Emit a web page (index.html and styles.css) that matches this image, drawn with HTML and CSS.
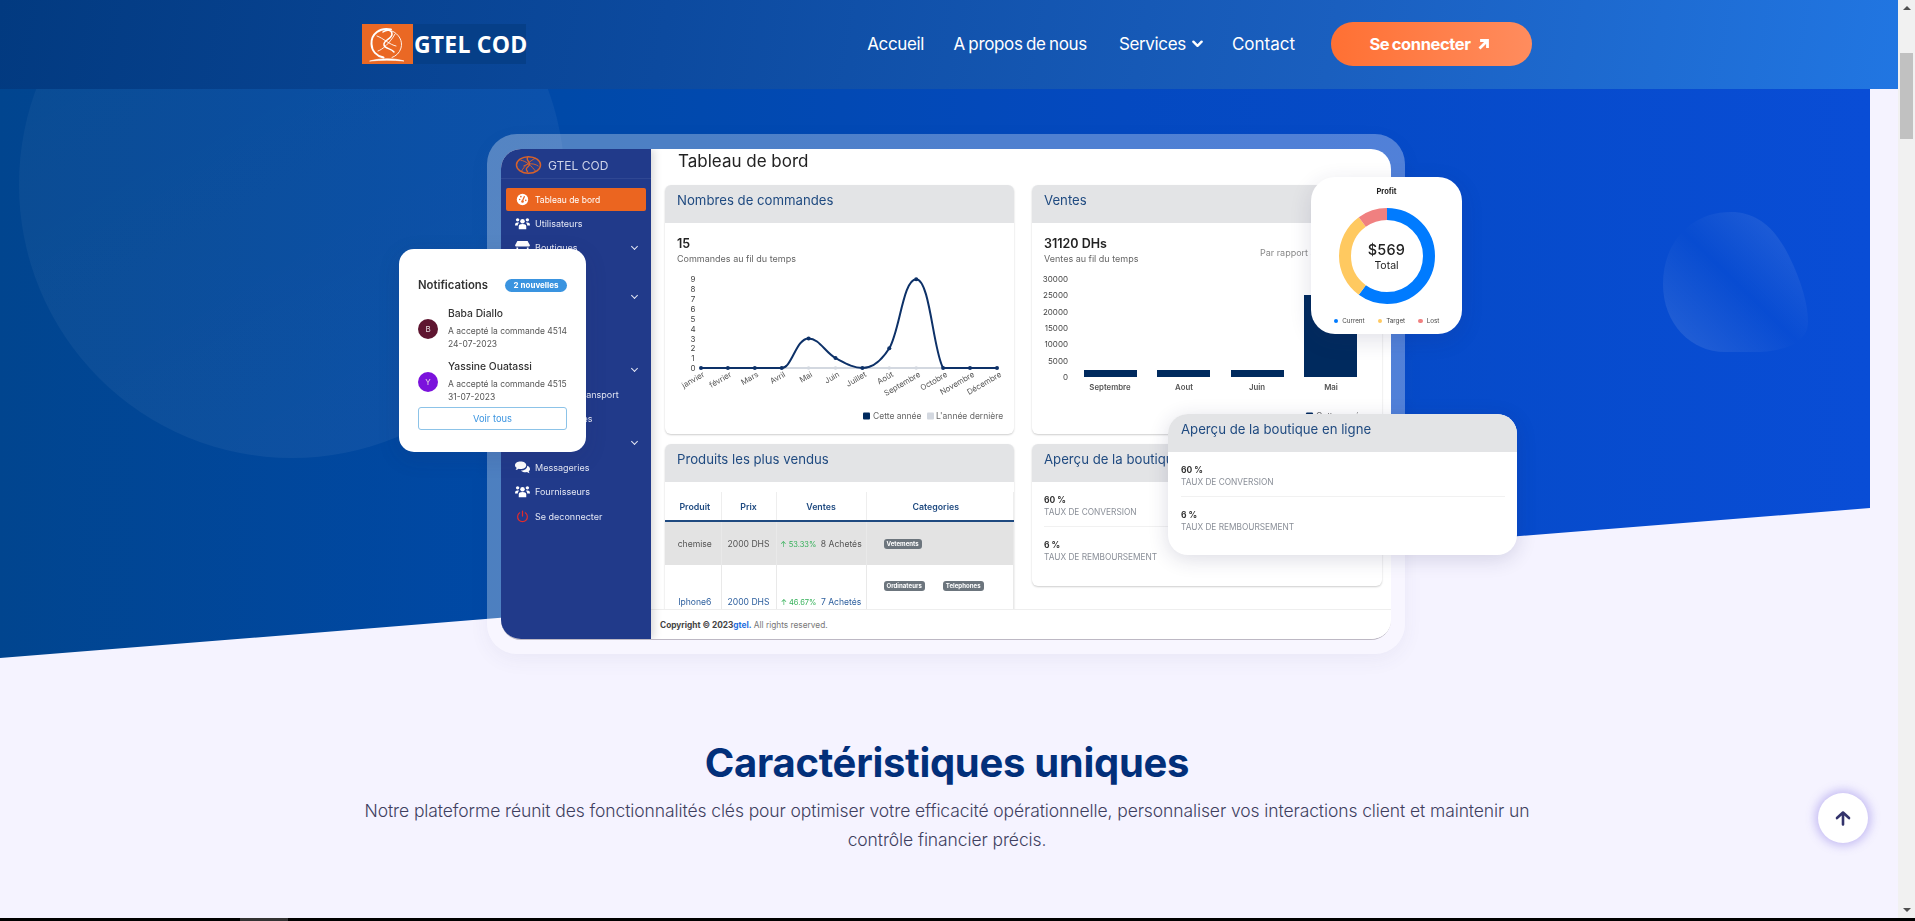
FILE: index.html
```html
<!DOCTYPE html>
<html lang="fr">
<head>
<meta charset="utf-8">
<title>GTEL COD</title>
<link rel="stylesheet" href="styles.css">
</head>
<body>
<div class="app">
  <div class="page">
    <header class="topbar">
      <div class="container topbar-row">
        <a class="logo">
          <span class="logo-mark">
            <svg viewBox="0 0 51 40" width="51" height="40" fill="none" stroke="#fff" stroke-linecap="round">
              <path d="M29 5.500C18 3 9 10 9.500 20c.3 7 5 12 12 13.500" stroke-width="2"/>
              <path d="M30 7c7 3 11 10 9 17-1.500 5-5 8-9 9.500" stroke-width=".9"/>
              <path d="M21 8c4-3 9-2 9 2 0 5-9 6-8 11 .8 4 7 3 10 7" stroke-width="1.500"/>
              <path d="M15 12c6 2 13 9 19 10M16 27c4-1 12-8 17-17" stroke-width=".9"/>
              <path d="M8 37c9-3 25-3 34 0-11-1-23-1-34 0z" fill="#fff" stroke-width=".6"/>
            </svg>
          </span>
          <span class="logo-text">GTEL COD</span>
        </a>
        <nav class="nav">
          <a class="nav-link">Accueil</a>
          <a class="nav-link">A propos de nous</a>
          <a class="nav-link nav-drop">Services
            <svg viewBox="0 0 12 8" width="11" height="8" fill="none" stroke="#fff" stroke-width="2.600" stroke-linecap="round" stroke-linejoin="round"><path d="M1.500 1.500 6 6l4.500-4.500"/></svg>
          </a>
          <a class="nav-link">Contact</a>
          <a class="cta">Se connecter
            <svg viewBox="0 0 12 12" width="12" height="12" fill="none" stroke="#fff" stroke-width="2.800" stroke-linecap="square"><path d="M2.500 9.500 9 3M3.500 2.500H9.500V8.500"/></svg>
          </a>
        </nav>
      </div>
    </header>

    <section class="hero">
      <div class="hero-bg">
        <span class="blob blob-left"></span>
        <svg class="blob-right" viewBox="0 0 145 140" width="145" height="140">
          <defs>
            <linearGradient id="blobGrad2" x1="0" y1="1" x2="1" y2="0">
              <stop offset="0" stop-color="#fff" stop-opacity=".13"/>
              <stop offset=".5" stop-color="#fff" stop-opacity="0"/>
              <stop offset="1" stop-color="#fff" stop-opacity=".13"/>
            </linearGradient>
          </defs>
          <path d="M68 0c26 0 44 16 58 44 12 24 19 48 19 66 0 22-26 30-55 30H62C28 140 0 112 0 72 0 30 28 0 68 0z" fill="url(#blobGrad2)"/>
        </svg>
      </div>

      <div class="container">
        <div class="mock">
          <div class="mock-inner">
            <aside class="side">
              <div class="side-brand">
                <svg viewBox="0 0 28 22" width="27" height="22" fill="none" stroke="#d9622a" stroke-linecap="round">
                  <ellipse cx="14" cy="11" rx="12.500" ry="8.500" fill="#2a3f8c" stroke-width="1.500"/>
                  <path d="M6 6c6 1 11 6 15 11M21 4C15 7 9 13 7 17M9 12c5-3 11-3 15 0" stroke-width="1"/>
                  <path d="M13 3c-2 4 4 5 2 8s-5 3-2 7" stroke-width="1.400"/>
                </svg>
                <span>GTEL COD</span>
              </div>
              <ul class="menu">
                <li class="menu-item active">
                  <svg class="ico" viewBox="0 0 16 16"><circle cx="8" cy="8" r="7" fill="#fff"/><path d="M8 9.500 10.500 4" stroke="#eb6520" stroke-width="1.500"/><circle cx="4.500" cy="8" r="1" fill="#eb6520"/><circle cx="6" cy="4.500" r="1" fill="#eb6520"/><circle cx="12" cy="9" r="1" fill="#eb6520"/><circle cx="8" cy="10.500" r="1.600" fill="#eb6520"/></svg>
                  Tableau de bord</li>
                <li class="menu-item">
                  <svg class="ico" viewBox="0 0 16 13" fill="#fff"><circle cx="8" cy="4" r="2.400"/><circle cx="2.800" cy="2.600" r="1.800"/><circle cx="13.200" cy="2.600" r="1.800"/><path d="M4 12.500V9.500C4 7.700 5.500 7 8 7s4 .7 4 2.500v3zM0 8.500C0 6 1 5.300 2.800 5.300c.7 0 1.200.1 1.600.4C3.500 6.400 3 7.400 3 8.500zM16 8.500c0-2.500-1-3.200-2.800-3.200-.7 0-1.200.1-1.600.4.9.7 1.400 1.700 1.400 2.800z"/></svg>
                  Utilisateurs</li>
                <li class="menu-item">
                  <svg class="ico" viewBox="0 0 16 14" fill="#fff"><path d="M2.500 0h11L16 4.500c0 1-.8 1.500-1.500 1.500h-13C.8 6 0 5.500 0 4.500z"/><path d="M1.500 7h1.800v4.500h9.400V7h1.800v7h-1.800v-1H3.300v1H1.500z"/></svg>
                  Boutiques <span class="caret"></span></li>
                <li class="menu-item"><span class="ico"></span>Ventes</li>
                <li class="menu-item"><span class="ico"></span>Produits <span class="caret"></span></li>
                <li class="menu-item"><span class="ico"></span>Stocks</li>
                <li class="menu-item"><span class="ico"></span>Livraisons</li>
                <li class="menu-item"><span class="ico"></span>Logistique <span class="caret"></span></li>
                <li class="menu-item"><span class="ico"></span>Modes de transport</li>
                <li class="menu-item"><span class="ico"></span>Mes comptes</li>
                <li class="menu-item"><span class="ico"></span>Finances <span class="caret"></span></li>
                <li class="menu-item">
                  <svg class="ico" viewBox="0 0 16 13" fill="#fff"><path d="M6 0c3.300 0 6 1.700 6 4s-2.700 4-6 4c-.8 0-1.500-.1-2.200-.3C2.800 8.500 1.500 9 .5 9c.6-.6 1.100-1.300 1.200-2.200C.6 6.100 0 5.100 0 4c0-2.300 2.700-4 6-4z"/><path d="M13 4.500c1.800.7 3 2 3 3.500 0 1-.5 1.900-1.400 2.600.1.700.5 1.400 1 1.900-.9 0-2-.4-2.900-1.100-.5.1-1.100.2-1.700.2-2 0-3.800-.8-4.600-2 3.900 0 6.700-2.200 6.600-5.100z"/></svg>
                  Messageries</li>
                <li class="menu-item">
                  <svg class="ico" viewBox="0 0 16 13" fill="#fff"><circle cx="8" cy="4" r="2.400"/><circle cx="2.800" cy="2.600" r="1.800"/><circle cx="13.200" cy="2.600" r="1.800"/><path d="M4 12.500V9.500C4 7.700 5.500 7 8 7s4 .7 4 2.500v3zM0 8.500C0 6 1 5.300 2.800 5.300c.7 0 1.200.1 1.600.4C3.500 6.400 3 7.400 3 8.500zM16 8.500c0-2.500-1-3.200-2.800-3.200-.7 0-1.200.1-1.600.4.9.7 1.400 1.700 1.400 2.800z"/></svg>
                  Fournisseurs</li>
                <li class="menu-item">
                  <svg class="ico" viewBox="0 0 16 16" fill="none" stroke="#e02c2c" stroke-width="1.500" stroke-linecap="round"><path d="M8 1.500v6M4.500 3.500a6 6 0 1 0 7 0"/></svg>
                  Se deconnecter</li>
              </ul>
            </aside>

            <div class="main">
              <div class="main-scroll">
                <h2 class="main-title">Tableau de bord</h2>
                <div class="cards">
                  <article class="card card-tall">
                    <h3 class="card-head">Nombres de commandes</h3>
                    <div class="stat"><div><strong>15</strong><p>Commandes au fil du temps</p></div></div>
                    <svg class="chart" viewBox="0 0 349 160" width="349" height="160">
                      <g class="tick-y">
                        <text x="28" y="101">0</text><text x="28" y="91">1</text><text x="28" y="81">2</text><text x="28" y="71.500">3</text><text x="28" y="61.500">4</text><text x="28" y="51.500">5</text><text x="28" y="42">6</text><text x="28" y="32">7</text><text x="28" y="22">8</text><text x="28" y="12">9</text>
                      </g>
                      <g class="tick-x">
                        <text transform="translate(40 106) rotate(-30)">janvier</text>
                        <text transform="translate(67 106) rotate(-30)">février</text>
                        <text transform="translate(94 106) rotate(-30)">Mars</text>
                        <text transform="translate(121 106) rotate(-30)">Avril</text>
                        <text transform="translate(148 106) rotate(-30)">Mai</text>
                        <text transform="translate(175 106) rotate(-30)">Juin</text>
                        <text transform="translate(202 106) rotate(-30)">Juillet</text>
                        <text transform="translate(229 106) rotate(-30)">Août</text>
                        <text transform="translate(256 106) rotate(-30)">Septembre</text>
                        <text transform="translate(283 106) rotate(-30)">Octobre</text>
                        <text transform="translate(310 106) rotate(-30)">Novembre</text>
                        <text transform="translate(337 106) rotate(-30)">Décembre</text>
                      </g>
                      <path d="M116.700 98H278" class="line-old"/>
                      <g class="dots-old"><circle cx="143.600" cy="98" r="1.800"/><circle cx="170.500" cy="98" r="1.800"/><circle cx="224.300" cy="98" r="1.800"/><circle cx="251.200" cy="98" r="1.800"/></g>
                      <path class="line-new" d="M36 98H116.700C127 98 131 68.400 143.600 68.400 154 68.400 160 82 170.500 88.100 180 93 188 98 197.400 98 208 98 217 90 224.300 78.300 235 60 238 9.200 251.200 9.200 265 9.200 268 80 278.100 98H332"/>
                      <g class="dots-new"><circle cx="36" cy="98" r="2"/><circle cx="62.900" cy="98" r="2"/><circle cx="89.800" cy="98" r="2"/><circle cx="116.700" cy="98" r="2"/><circle cx="143.600" cy="68.400" r="2"/><circle cx="170.500" cy="88.100" r="2"/><circle cx="197.400" cy="98" r="2"/><circle cx="224.300" cy="78.300" r="2"/><circle cx="251.200" cy="9.200" r="2"/><circle cx="278.100" cy="98" r="2"/><circle cx="305" cy="98" r="2"/><circle cx="332" cy="98" r="2"/></g>
                      <rect x="198" y="142.500" width="7" height="7" rx="1" fill="#002a5e"/>
                      <text class="legend" x="208" y="149">Cette année</text>
                      <rect x="262" y="142.500" width="7" height="7" rx="1" fill="#d3d8e0"/>
                      <text class="legend" x="271" y="149">L'année dernière</text>
                    </svg>
                  </article>

                  <article class="card card-tall">
                    <h3 class="card-head">Ventes</h3>
                    <div class="stat stat-split"><div><strong>31120 DHs</strong><p>Ventes au fil du temps</p></div><span class="compare">Par rapport au mois dernier</span></div>
                    <svg class="chart" viewBox="0 0 350 160" width="350" height="160">
                      <g class="tick-end">
                        <text x="36" y="12">30000</text><text x="36" y="28">25000</text><text x="36" y="44.500">20000</text><text x="36" y="61">15000</text><text x="36" y="77">10000</text><text x="36" y="93.500">5000</text><text x="36" y="110">0</text>
                      </g>
                      <g fill="#002a5e"><rect x="52" y="100" width="53" height="7"/><rect x="125" y="100" width="53" height="7"/><rect x="199" y="100" width="53" height="7"/><rect x="272" y="25" width="53" height="82"/></g>
                      <g class="tick-mid">
                        <text x="78" y="120">Septembre</text><text x="152" y="120">Aout</text><text x="225" y="120">Juin</text><text x="299" y="120">Mai</text>
                      </g>
                      <rect x="274" y="142.500" width="7" height="7" rx="1" fill="#002a5e"/>
                      <text class="legend" x="284" y="149">Cette année</text>
                    </svg>
                  </article>

                  <article class="card">
                    <h3 class="card-head">Produits les plus vendus</h3>
                    <table class="table">
                      <thead><tr><th>Produit</th><th>Prix</th><th>Ventes</th><th>Categories</th></tr></thead>
                      <tbody>
                        <tr class="row-grey">
                          <td>chemise</td><td>2000 DHS</td>
                          <td><span class="up">↑ 53.33%</span> 8 Achetés</td>
                          <td class="cats"><span class="tag">Vetements</span></td>
                        </tr>
                        <tr class="row-link">
                          <td>Iphone6</td><td>2000 DHS</td>
                          <td><span class="up">↑ 46.67%</span> 7 Achetés</td>
                          <td class="cats cats-top"><span class="tag">Ordinateurs</span><span class="tag">Telephones</span></td>
                        </tr>
                      </tbody>
                    </table>
                  </article>

                  <article class="card">
                    <h3 class="card-head">Aperçu de la boutique en ligne</h3>
                    <div class="kpi"><strong>60 %</strong><span>TAUX DE CONVERSION</span></div>
                    <div class="kpi"><strong>6 %</strong><span>TAUX DE REMBOURSEMENT</span></div>
                  </article>
                </div>
              </div>
              <footer class="mock-foot"><b>Copyright © 2023</b><b class="brand">gtel.</b> All rights reserved.</footer>
            </div>
          </div>

          <div class="float notif">
            <div class="notif-head"><h4>Notifications</h4><span class="pill">2 nouvelles</span></div>
            <div class="notif-row">
              <span class="avatar avatar-b">B</span>
              <div><h5>Baba Diallo</h5><p>A accepté la commande 4514<br>24-07-2023</p></div>
            </div>
            <div class="notif-row">
              <span class="avatar avatar-y">Y</span>
              <div><h5>Yassine Ouatassi</h5><p>A accepté la commande 4515<br>31-07-2023</p></div>
            </div>
            <a class="see-all">Voir tous</a>
          </div>

          <div class="float profit">
            <h4>Profit</h4>
            <div class="donut">
              <svg viewBox="0 0 96 96" width="96" height="96" fill="none" stroke-width="12">
                <circle cx="48" cy="48" r="42" stroke="#007bff" pathLength="100" stroke-dasharray="60 40" transform="rotate(-90 48 48)"/>
                <circle cx="48" cy="48" r="42" stroke="#ffc960" pathLength="100" stroke-dasharray="30 70" stroke-dashoffset="-60" transform="rotate(-90 48 48)"/>
                <circle cx="48" cy="48" r="42" stroke="#f08080" pathLength="100" stroke-dasharray="10 90" stroke-dashoffset="-90" transform="rotate(-90 48 48)"/>
              </svg>
              <div class="donut-label"><b>$569</b><span>Total</span></div>
            </div>
            <ul class="profit-legend">
              <li><i class="dot dot-blue"></i>Current</li>
              <li><i class="dot dot-yellow"></i>Target</li>
              <li><i class="dot dot-red"></i>Lost</li>
            </ul>
          </div>

          <div class="float overview card">
            <h3 class="card-head">Aperçu de la boutique en ligne</h3>
            <div class="kpi"><strong>60 %</strong><span>TAUX DE CONVERSION</span></div>
            <div class="kpi"><strong>6 %</strong><span>TAUX DE REMBOURSEMENT</span></div>
          </div>
        </div>
      </div>
    </section>

    <section class="features container">
      <h2>Caractéristiques uniques</h2>
      <p>Notre plateforme réunit des fonctionnalités clés pour optimiser votre efficacité opérationnelle, personnaliser vos interactions client et maintenir un contrôle financier précis.</p>
    </section>

    <a class="to-top">
      <svg viewBox="0 0 16 16" width="16" height="16" fill="none" stroke="#33336b" stroke-width="2.600" stroke-linecap="round" stroke-linejoin="round"><path d="M8 14.500V2.500M2 8l6-5.500L14 8"/></svg>
    </a>
  </div>

  <div class="scrollbar">
    <span class="arrow arrow-up"></span>
    <span class="thumb"></span>
    <span class="arrow arrow-down"></span>
  </div>
</div>
<div class="taskbar"><span></span></div>
</body>
</html>
```

FILE: styles.css
```css
* { box-sizing: border-box; }
html, body { margin: 0; padding: 0; height: 100%; overflow: hidden; }
body { font-family: "Inter", "Liberation Sans", sans-serif; background: #f5f3ff; color: #333; }
h2, h3, h4, h5, p, ul { margin: 0; padding: 0; }
ul { list-style: none; }

.app { display: flex; height: 918px; }
.page { position: relative; flex: 1; min-width: 0; height: 918px; overflow: hidden; background: #f5f3ff; }
.container { width: 1170px; margin-left: 362px; }

/* Scrollbar */
.scrollbar { width: 17px; background: #f1f1f1; display: flex; flex-direction: column; align-items: center; padding-top: 6px; position: relative; }
.arrow { width: 0; height: 0; border-left: 4px solid transparent; border-right: 4px solid transparent; }
.arrow-up { border-bottom: 4px solid #505050; }
.thumb { width: 13px; height: 86px; background: #c1c1c1; margin-top: 43px; }
.arrow-down { border-top: 4px solid #505050; margin-top: auto; margin-bottom: 6px; }
.taskbar { height: 3px; background: #000; padding-left: 240px; }
.taskbar span { display: block; width: 48px; height: 3px; background: #333; }

/* Top bar */
.topbar { height: 89px; position: relative; z-index: 2; background: linear-gradient(100deg, #023a80 0%, #0c4a9f 35%, #1a5fbf 70%, #2176e2 100%); }
.topbar-row { height: 88px; display: flex; align-items: center; justify-content: space-between; }
.logo { display: flex; height: 40px; }
.logo-mark { width: 51px; height: 40px; background: #ea6824; display: block; }
.logo-mark svg { display: block; }
.logo-text { width: 113px; background: #063f88; color: #fff; font: 700 23px/40px "Open Sans", sans-serif; letter-spacing: .2px; white-space: nowrap; padding-left: 1px; }
.nav { display: flex; align-items: center; }
.nav-link { color: #fff; font-size: 17px; font-weight: 400; letter-spacing: -.35px; word-spacing: -1px; margin-right: 32px; white-space: nowrap; }
.nav-link:first-child { margin-right: 29.500px; }
.nav-drop { display: flex; align-items: center; gap: 6px; margin-right: 29px; }
.nav-link:nth-child(4) { margin-right: 36px; letter-spacing: 0; }
.cta { width: 201px; height: 44px; border-radius: 22px; background: linear-gradient(90deg, #ff7033, #ff8c5e); color: #fff; font-size: 16.500px; font-weight: 700; letter-spacing: -.4px; word-spacing: -1px; display: flex; align-items: center; justify-content: center; gap: 7px; padding-right: 4px; white-space: nowrap; }

/* Hero */
.hero { position: relative; padding-top: 45px; }
.hero-bg { position: absolute; left: 0; top: 0; width: 1870px; height: 569px; overflow: hidden; background: linear-gradient(90deg, #01458f 0%, #0049a8 30%, #0449c0 60%, #094dd6 100%); clip-path: polygon(0 0, 100% 0, 100% 419px, 0 569px); }
.blob { position: absolute; display: block; }
.blob-left { left: 19px; top: -178px; width: 546px; height: 547px; border-radius: 50%; background: linear-gradient(150deg, rgba(255,255,255,.03), rgba(255,255,255,.055)); }
.blob-right { position: absolute; left: 1663px; top: 123px; }

/* Mock */
.mock { position: relative; width: 918px; height: 520px; margin-left: 125px; padding: 15px 14px 14px; border-radius: 30px; background: rgba(255,255,255,.3); box-shadow: 0 6px 20px rgba(60,60,120,.06); filter: blur(.3px); }
.mock-inner { display: grid; grid-template-columns: 150px 1fr; grid-template-rows: minmax(0, 1fr); width: 890px; height: 491px; border-radius: 20px; overflow: hidden; background: #fff; border-bottom: 1px solid #bdb8c4; }

.side { background: #213a8a; color: #dfe3f2; box-shadow: 3px 0 8px rgba(0,0,0,.15); position: relative; z-index: 1; min-height: 0; }
.side-brand { height: 30px; display: flex; align-items: center; gap: 6px; padding: 3px 0 0 14px; border-bottom: 1px solid #2f4793; font-size: 12px; color: #cdd3e8; margin-bottom: 9px; }
.menu { padding: 0 5px; }
.menu-item { position: relative; height: 24.400px; display: flex; align-items: center; font-size: 9px; padding-left: 9px; color: #e4e7f4; white-space: nowrap; }
.menu-item.active { height: 23px; background: #eb6520; color: #fff; border-radius: 2px; margin-bottom: .4px; font-size: 8.500px; }
.ico { width: 15px; height: 13px; margin-right: 5px; flex: none; display: block; }
.caret { position: absolute; right: 9px; top: 8px; width: 5px; height: 5px; border-right: 1.300px solid #e4e7f4; border-bottom: 1.300px solid #e4e7f4; transform: rotate(45deg); }

.main { display: flex; flex-direction: column; min-width: 0; min-height: 0; }
.main-scroll { flex: 1; min-height: 0; overflow: hidden; padding-left: 14px; }
.main-title { height: 36px; padding-left: 13px; font-size: 17px; font-weight: 400; line-height: 24px; color: #222; }
.cards { display: grid; grid-template-columns: 349px 350px; grid-auto-rows: min-content; align-items: start; column-gap: 18px; row-gap: 10px; }
.card { background: #fff; border-radius: 6px; box-shadow: 0 1px 2px rgba(0,0,0,.2); overflow: hidden; }
.card-tall { height: 249px; }
.card-head { height: 38px; padding: 6px 0 0 12px; background: #e3e4e6; color: #1f4a80; font-size: 13.200px; font-weight: 400; line-height: 18px; }
.stat { padding: 13px 12px 0; height: 47px; font-size: 9px; color: #666; }
.stat strong { display: block; color: #222; font-size: 12.500px; font-weight: 600; line-height: 16px; }
.stat p { line-height: 13px; }
.stat-split { display: grid; grid-template-columns: 216px 1fr; }
.compare { color: #888; white-space: nowrap; padding-top: 11px; }
.chart { display: block; }
.chart text { font-family: "Inter", sans-serif; }
.tick-y text { font-size: 8px; fill: #444; text-anchor: middle; }
.tick-x text { font-size: 7.800px; fill: #555; text-anchor: end; }
.tick-end text { font-size: 8px; fill: #444; text-anchor: end; }
.tick-mid text { font-size: 7.800px; font-weight: 600; fill: #555; text-anchor: middle; }
.legend { font-size: 8.500px; fill: #666; }
.line-old { stroke: #d3d8e0; stroke-width: 2; fill: none; }
.dots-old { fill: #d3d8e0; }
.line-new { stroke: #0d3168; stroke-width: 2; fill: none; }
.dots-new { fill: #0d3168; }

.table { width: 349px; margin-top: 10px; border-collapse: collapse; table-layout: fixed; font-size: 8.600px; color: #555; }
.table th { height: 29px; color: #1f4a80; font-size: 8.800px; font-weight: 600; border-bottom: 2px solid #1f4a80; border-right: 1px solid #eee; padding: 0; }
.table th:nth-child(1) { width: 56px; padding-left: 4px; }
.table th:nth-child(2) { width: 55px; }
.table th:nth-child(3) { width: 90px; }
.table th:nth-child(4) { padding-right: 8px; }
.table td { height: 43px; text-align: center; padding: 0; border-right: 1px solid #e9e9e9; white-space: nowrap; }
.table td:first-child { padding-left: 4px; }
.row-grey td { background: #e3e3e3; height: 44px; }
.row-link td { color: #2d5f9e; height: 70px; vertical-align: bottom; padding-bottom: 28px; }
.up { color: #36b15a; font-size: 7.500px; margin-right: 2px; }
.cats { text-align: left !important; padding-left: 17px !important; }
.cats-top { vertical-align: top !important; padding: 15px 0 0 17px !important; }
.tag { display: inline-block; height: 10px; line-height: 10px; padding: 0 3px; margin-right: 18px; border-radius: 3px; background: #6c757d; color: #fff; font-size: 6.100px; font-weight: 700; }

.kpi { margin: 0 12px; height: 44.500px; padding-top: 12px; border-bottom: 1px solid #f1f1f1; }
.kpi:last-child { border-bottom: 0; height: 59px; }
.kpi strong { display: block; font-size: 8.500px; font-weight: 700; line-height: 12px; color: #333; }
.kpi span { display: block; font-size: 8.300px; line-height: 13px; color: #8a8f98; }

.mock-foot { height: 30px; line-height: 31px; padding-left: 9px; background: #fff; border-top: 1px solid #eee; font-size: 8.300px; color: #777; white-space: nowrap; flex: none; position: relative; }
.mock-foot b { color: #444; font-weight: 700; }
.mock-foot .brand { color: #1f6fe0; }

/* Floating cards */
.float { position: absolute; background: #fff; z-index: 3; box-shadow: 0 6px 22px rgba(40,40,90,.14); }
.notif { left: -88px; top: 115px; width: 187px; height: 203px; border-radius: 15px; padding: 27px 19px 0; }
.notif-head { display: flex; justify-content: space-between; align-items: center; height: 18px; margin-bottom: 8px; }
.notif-head h4 { font-size: 11.300px; font-weight: 600; color: #333; }
.pill { width: 62px; height: 13px; border-radius: 7px; background: #3a94e0; color: #fff; font-size: 8px; font-weight: 700; line-height: 13px; text-align: center; }
.notif-row { display: flex; align-items: center; gap: 10px; height: 53px; }
.notif-row h5 { font-size: 10.300px; font-weight: 500; line-height: 14px; color: #333; margin-bottom: 5px; }
.notif-row p { font-size: 8.500px; line-height: 13px; color: #555; white-space: nowrap; }
.avatar { flex: none; width: 20px; height: 20px; border-radius: 50%; color: #e8dde0; font-size: 8px; line-height: 20px; text-align: center; }
.avatar-b { background: #5e1530; }
.avatar-y { background: #7b12dc; }
.see-all { display: block; height: 23px; border: 1px solid #8cc3e8; border-radius: 3px; text-align: center; line-height: 21px; font-size: 9.300px; color: #3a94e0; margin-top: -1px; position: relative; }

.profit { left: 824px; top: 43px; width: 151px; height: 157px; border-radius: 24px; text-align: center; padding-top: 10px; }
.profit h4 { font-size: 7.500px; font-weight: 700; color: #222; line-height: 10px; }
.donut { position: relative; width: 96px; height: 96px; margin: 11px auto 0; }
.donut svg { display: block; }
.donut-label { position: absolute; inset: 2px 0 0; display: flex; flex-direction: column; align-items: center; justify-content: center; color: #222; }
.donut-label b { font-size: 14.500px; font-weight: 500; line-height: 18px; letter-spacing: .2px; }
.donut-label span { font-size: 10.500px; line-height: 14px; }
.profit-legend { display: flex; justify-content: center; gap: 13px; margin-top: 13px; font-size: 6.300px; color: #444; }
.profit-legend li { display: flex; align-items: center; gap: 4px; }
.dot { width: 4.500px; height: 4.500px; border-radius: 50%; display: block; }
.dot-blue { background: #007bff; }
.dot-yellow { background: #ffc960; }
.dot-red { background: #f08080; }

.overview { left: 681px; top: 280px; width: 349px; height: 141px; border-radius: 20px; box-shadow: 0 4px 20px rgba(40,40,90,.16); }
.overview .card-head { padding-left: 13px; }
.overview .kpi { margin-left: 13px; }
.overview .kpi:last-child { height: auto; }

/* Features */
.features { padding-top: 83px; text-align: center; }
.features h2 { font-size: 40px; font-weight: 700; line-height: 52px; color: #022f7a; letter-spacing: -.3px; }
.features p { margin-top: 7px; font-size: 17.500px; font-weight: 300; line-height: 29px; color: #3f3f60; letter-spacing: -.1px; }

.to-top { position: absolute; left: 1818px; top: 793px; width: 50px; height: 50px; border-radius: 50%; background: #fff; box-shadow: 0 0 10px 3px rgba(110,90,220,.35); display: flex; align-items: center; justify-content: center; }
```
